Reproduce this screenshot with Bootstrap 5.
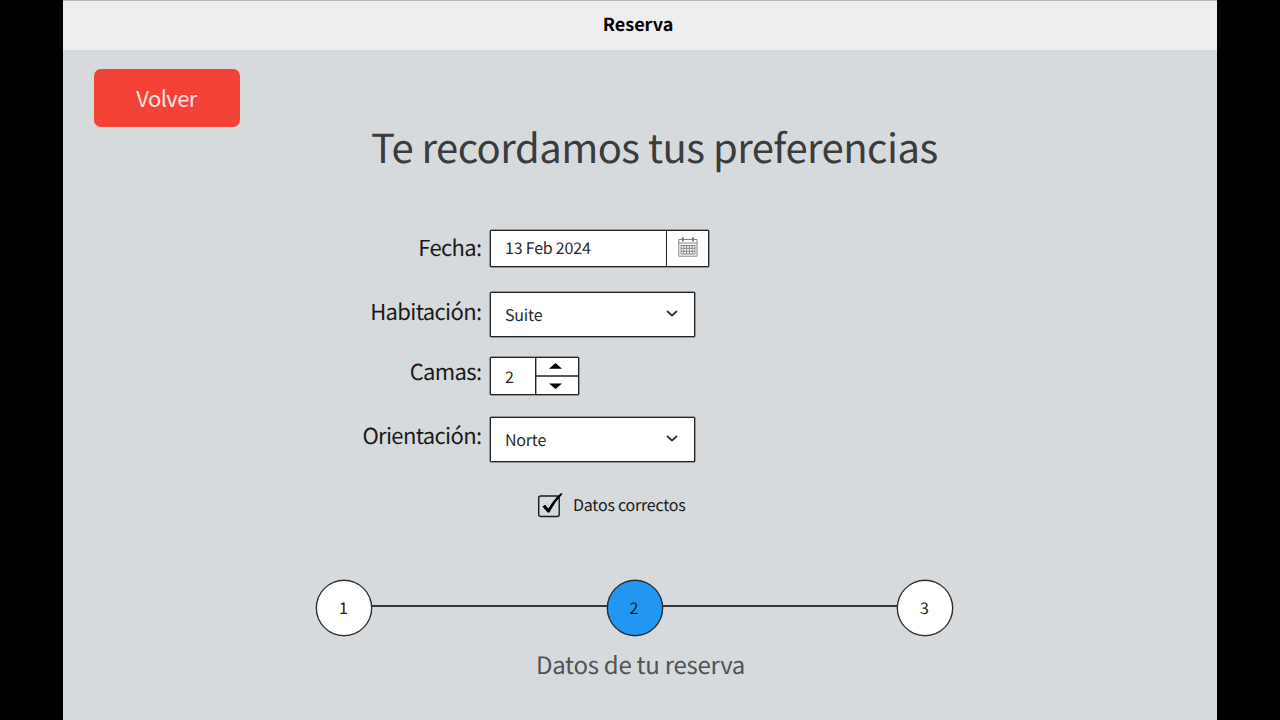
<!DOCTYPE html>
<html lang="es">
<head>
<meta charset="utf-8">
<meta name="viewport" content="width=device-width, initial-scale=1">
<title>Reserva</title>
<link href="https://cdn.jsdelivr.net/npm/bootstrap@5.3.0/dist/css/bootstrap.min.css" rel="stylesheet">
<style>
body{background:#000;font-family:"Noto Sans CJK SC","Noto Sans",sans-serif;font-size:16px;height:720px;overflow:hidden;text-rendering:geometricPrecision}
.stage{width:1154px;height:720px;margin-left:63px;background:#d6dadd;color:#1a1a1a}
.topbar{height:50px;background:#eee;border-top:1px solid #b5b5b5;color:#000;font-size:18px;line-height:46px;padding-right:4px}
.btn-back{width:146px;height:58px;margin:19px 0 0 31px;background:#f44336!important;color:#fbe3e1!important;border:0;border-radius:7px;font-size:22px;line-height:55px;padding:0 1px 1px 0;letter-spacing:-.6px}
.title{font-size:40px;line-height:44px;margin:-3px 0 0 308px;color:#3a3c3d;font-weight:400;white-space:nowrap;letter-spacing:-.53px}
.fields{margin-top:62px}
.field-row{gap:8px}
.field-label{width:419px;padding-right:.6px;text-align:right;font-size:22px;line-height:35px;white-space:nowrap;letter-spacing:-.65px}
.box{background:#fff;border:1px solid #222;box-shadow:0 0 0 .5px #555;border-radius:1px;font-size:16px;color:#2a2a2a;letter-spacing:-.2px}
.box-text{padding-left:14px}
.date{width:219px;height:37px}
.date-btn{width:42px;border-left:1px solid #222}
.pick{width:205px;height:45px}
.pick .box-text{margin-top:-2px}
.spin{width:89px;height:38px}
.check-row{margin:29px 0 0 474px;font-size:16px;line-height:27px;gap:9px;letter-spacing:-.22px}
.steps{margin:60px 0 0 253px;width:637px;height:57px}
.dot{width:56px;height:56px;border:1px solid #222;box-shadow:0 0 0 .4px #444;border-radius:50%;background:#fff;font-size:16px;line-height:53px;text-align:center;flex:none;padding-right:1px}
.dot.current{background:#2196f3}
.rail{height:2px;background:#333537;margin-bottom:3px}
.caption-text{font-size:24px;line-height:32px;margin:12px 0 0 473px;color:#505355;white-space:nowrap;letter-spacing:-.28px}
</style>
</head>
<body>
<main class="stage d-flex flex-column">
<header class="topbar text-center fw-bold flex-shrink-0">Reserva</header>
<button type="button" class="btn btn-back flex-shrink-0">Volver</button>
<h1 class="title mb-0">Te recordamos tus preferencias</h1>
<form class="fields">
<div class="field-row d-flex" style="height:62px">
<label class="field-label">Fecha:</label>
<div class="box date d-flex">
<span class="box-text flex-grow-1" style="line-height:33px">13 Feb 2024</span>
<span class="date-btn d-flex justify-content-center align-items-center">
<svg class="mb-1" width="20" height="20" viewBox="0 0 20 20" fill="none" stroke="#858585"><path d="M.8 2.500H19V19.200H.8ZM1 6H19"/><path d="M3 8.500H17V17H3ZM3 11.300H17M3 14.200H17M5.800 8.500V17M8.600 8.500V17M11.400 8.500V17M14.200 8.500V17"/><path d="M4.800 .3V4.500M15 .3V4.500" stroke="#777" stroke-width="1.800"/></svg>
</span>
</div>
</div>
<div class="field-row d-flex" style="height:65px">
<label class="field-label pt-1" style="line-height:30px">Habitación:</label>
<div class="box pick d-flex justify-content-between align-items-center"><span class="box-text">Suite</span>
<svg class="me-3 mb-1" width="12" height="8" viewBox="0 0 12 8" fill="none" stroke="#333" stroke-width="1.700"><path d="M1 2L6 6.500L11 2"/></svg></div>
</div>
<div class="field-row d-flex" style="height:60px">
<label class="field-label" style="line-height:28px">Camas:</label>
<div class="box spin d-flex"><span class="box-text flex-grow-1" style="line-height:36px">2</span>
<svg width="43" height="36" viewBox="0 0 43 36"><path d="M.7 0V36M0 18H43" stroke="#222" stroke-width="1.400"/><path d="M14 10.800L20.500 5L27 10.800ZM14 25.500L20.500 31L27 25.500Z" fill="#000"/></svg></div>
</div>
<div class="field-row d-flex" style="height:45px">
<label class="field-label" style="line-height:36px">Orientación:</label>
<div class="box pick d-flex justify-content-between align-items-center"><span class="box-text">Norte</span>
<svg class="me-3 mb-1" width="12" height="8" viewBox="0 0 12 8" fill="none" stroke="#333" stroke-width="1.700"><path d="M1 2L6 6.500L11 2"/></svg></div>
</div>
</form>
<div class="check-row d-flex">
<svg width="27" height="28" viewBox="0 0 27 28" fill="none"><rect x="1.700" y="5" width="20.500" height="20.500" rx="2" stroke="#1a1a1a" stroke-width="1.400"/><path d="M5.500 15.500L8.200 13.800L11.500 17.500Q16 9 24 2L25.500 3Q17 12 12.500 21.500H10.500Z" fill="#000"/></svg>
<span>Datos correctos</span>
</div>
<div class="steps d-flex align-items-center flex-shrink-0">
<div class="dot">1</div><div class="rail flex-grow-1"></div><div class="dot current">2</div><div class="rail flex-grow-1"></div><div class="dot">3</div>
</div>
<div class="caption-text">Datos de tu reserva</div>
</main>
<script src="https://cdn.jsdelivr.net/npm/bootstrap@5.3.0/dist/js/bootstrap.bundle.min.js"></script>
</body>
</html>
